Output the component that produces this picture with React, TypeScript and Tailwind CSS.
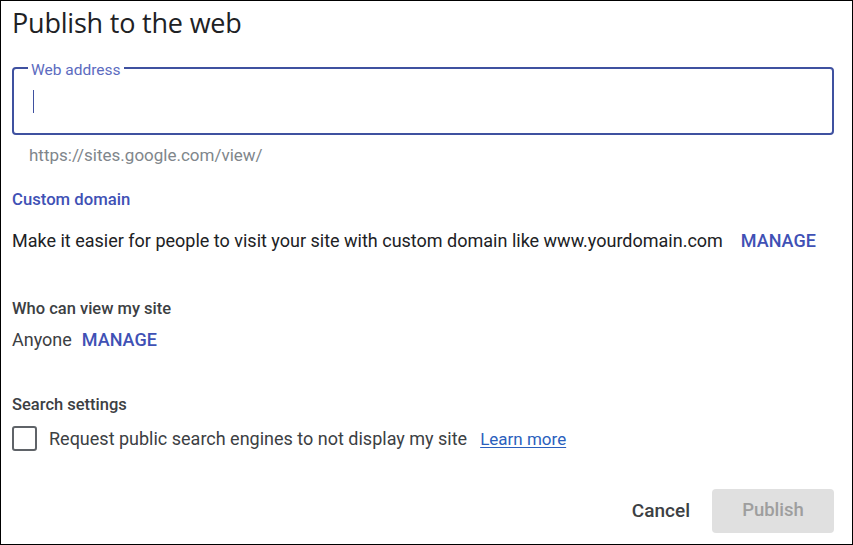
export default function App() {
  return (
    <div className="w-[853px] h-[545px] border border-black bg-white font-['Roboto',sans-serif] text-[#202124] flex flex-col">
      <h1 className="pl-[11px] pt-[4px] text-[27px] leading-[36px] font-['Open_Sans',sans-serif] tracking-[-0.2px] text-[#202124]">
        Publish to the web
      </h1>

      {/* address field with floating label */}
      <div className="mt-[26px] ml-[11px] mr-[18px] relative">
        <div className="h-[68px] border-2 border-[#3f51a0] rounded-[4px] flex items-center pl-[19px]">
          <span className="w-px h-[23px] bg-[#3f51a0]" />
        </div>
        <span className="absolute left-[16px] top-[-6px] px-[3px] bg-white text-[15.5px] leading-[18px] text-[#5c6bc0]">
          Web address
        </span>
      </div>
      <p className="ml-[28px] mt-[10px] text-[17px] leading-[20px] text-[#80868b]">https://sites.google.com/view/</p>

      <h2 className="ml-[11px] mt-[25px] text-[16.7px] leading-[20px] font-medium text-[#3f51b5]">Custom domain</h2>
      <div className="ml-[11px] mt-[21px] flex items-center text-[18px] leading-[20px]">
        <span>Make it easier for people to visit your site with custom domain like www.yourdomain.com</span>
        <button className="ml-[18px] font-medium text-[#3f51b5]">MANAGE</button>
      </div>

      <h2 className="ml-[11px] mt-[48px] text-[16.5px] leading-[20px] font-medium text-[#3c4043]">Who can view my site</h2>
      <div className="ml-[11px] mt-[11px] flex items-center text-[18px] leading-[20px]">
        <span className="text-[#3c4043]">Anyone</span>
        <button className="ml-[10px] font-medium text-[#3f51b5]">MANAGE</button>
      </div>

      <h2 className="ml-[11px] mt-[45px] text-[16.5px] leading-[20px] font-medium text-[#3c4043]">Search settings</h2>
      <label className="ml-[11px] mt-[11px] flex items-center">
        <span className="w-[25px] h-[25px] border-2 border-[#5f6368] rounded-[3px]" />
        <span className="ml-[12px] text-[18px] leading-[20px] text-[#3c4043]">
          Request public search engines to not display my site
        </span>
        <a className="ml-[13px] text-[17px] leading-[20px] text-[#2b5fbd] underline underline-offset-2">Learn more</a>
      </label>

      <div className="mt-auto mb-[11px] mr-[18px] flex items-center justify-end">
        <button className="text-[19px] font-medium text-[#3c4043] px-[2px]">Cancel</button>
        <button className="ml-[20px] w-[122px] h-[44px] rounded-[4px] bg-[#e0e0e0] text-[18.5px] font-medium text-[#9e9e9e]">
          Publish
        </button>
      </div>
    </div>
  );
}
